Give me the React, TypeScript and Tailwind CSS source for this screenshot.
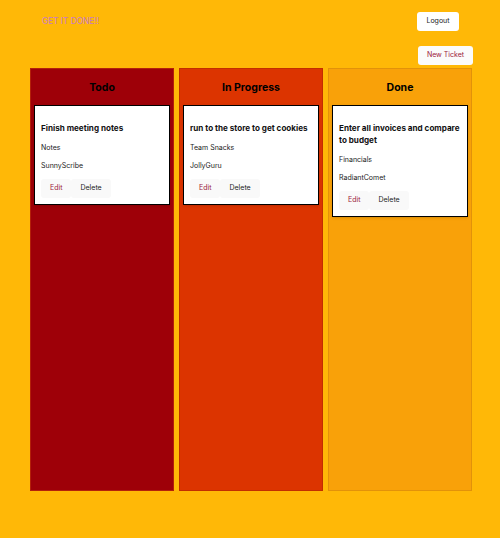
import React from "react";

type Ticket = {
  title: string;
  category: string;
  owner: string;
};

type Column = {
  name: string;
  bg: string;
  tickets: Ticket[];
};

const columns: Column[] = [
  {
    name: "Todo",
    bg: "bg-[#9e0008] border-[#b3200a]",
    tickets: [{ title: "Finish meeting notes", category: "Notes", owner: "SunnyScribe" }],
  },
  {
    name: "In Progress",
    bg: "bg-[#dc3400] border-[#c22e00]",
    tickets: [{ title: "run to the store to get cookies", category: "Team Snacks", owner: "JollyGuru" }],
  },
  {
    name: "Done",
    bg: "bg-[#f9a109] border-[#e2920a]",
    tickets: [
      { title: "Enter all invoices and compare to budget", category: "Financials", owner: "RadiantComet" },
    ],
  },
];

const TicketCard: React.FC<{ ticket: Ticket }> = ({ ticket }) => (
  <div className="mx-[3px] border border-black bg-white px-[6px] pt-[16px] pb-[6px] shadow-sm">
    <h3 className="text-[8.1px] leading-[12px] font-bold text-[#111]">{ticket.title}</h3>
    <p className="mt-[9px] text-[7px] leading-[10px] text-[#1a1a1a]">{ticket.category}</p>
    <p className="mt-[8px] text-[7px] leading-[10px] text-[#1a1a1a]">{ticket.owner}</p>
    <div className="mt-[8px] flex">
      <button className="h-[19px] rounded-[3px] bg-[#f9f9f9] px-[9px] text-[7px] text-[#9c1a3c]">Edit</button>
      <button className="h-[19px] rounded-[3px] bg-[#f9f9f9] px-[9px] text-[7px] text-[#222]">Delete</button>
    </div>
  </div>
);

export default function App() {
  return (
    <div className="min-h-[538px] bg-[#ffb807] font-['Inter',sans-serif]">
      <header className="flex items-start justify-between pl-[42px] pr-[41px] pt-[12px]">
        <h1 className="text-[8.3px] leading-[19px] text-[#c97bc6]">GET IT DONE!!</h1>
        <button className="h-[19px] w-[42px] rounded-[3px] bg-white text-[7px] text-[#222]">Logout</button>
      </header>
      <div className="mt-[15px] flex justify-end pr-[27px]">
        <button className="h-[19px] w-[55px] rounded-[3px] bg-[#fbfbfb] text-[7px] text-[#9c1a3c]">
          New Ticket
        </button>
      </div>
      <main className="mt-[3px] ml-[30px] grid h-[423px] w-[442px] grid-cols-3 gap-[5px]">
        {columns.map((col) => (
          <section key={col.name} className={`border ${col.bg}`}>
            <h2 className="mb-[10px] pt-[12px] text-center text-[10.5px] leading-[14px] font-bold text-black">
              {col.name}
            </h2>
            {col.tickets.map((t) => (
              <TicketCard key={t.title} ticket={t} />
            ))}
          </section>
        ))}
      </main>
    </div>
  );
}
